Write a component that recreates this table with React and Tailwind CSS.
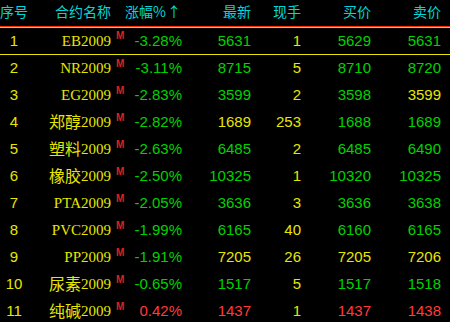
import React from 'react'

// quote board colours
const C = {
  y: 'text-[#e6e600]',
  g: 'text-[#00d200]',
  r: 'text-[#ff3b3b]',
}

const rows = [
  ['1', '', 'EB2009', '-3.28%', 'g', '5631', 'g', '1', '5629', 'g', '5631', 'g'],
  ['2', '', 'NR2009', '-3.11%', 'g', '8715', 'g', '5', '8710', 'g', '8720', 'g'],
  ['3', '', 'EG2009', '-2.83%', 'g', '3599', 'g', '2', '3598', 'g', '3599', 'y'],
  ['4', '郑醇', '2009', '-2.82%', 'g', '1689', 'y', '253', '1688', 'g', '1689', 'g'],
  ['5', '塑料', '2009', '-2.63%', 'g', '6485', 'g', '2', '6485', 'g', '6490', 'g'],
  ['6', '橡胶', '2009', '-2.50%', 'g', '10325', 'g', '1', '10320', 'g', '10325', 'g'],
  ['7', '', 'PTA2009', '-2.05%', 'g', '3636', 'g', '3', '3636', 'g', '3638', 'g'],
  ['8', '', 'PVC2009', '-1.99%', 'g', '6165', 'g', '40', '6160', 'g', '6165', 'g'],
  ['9', '', 'PP2009', '-1.91%', 'g', '7205', 'y', '26', '7205', 'y', '7206', 'y'],
  ['10', '尿素', '2009', '-0.65%', 'g', '1517', 'g', '5', '1517', 'g', '1518', 'g'],
  ['11', '纯碱', '2009', '0.42%', 'r', '1437', 'r', '1', '1437', 'r', '1438', 'r'],
]

const grid = 'grid grid-cols-[28px_97px_57px_69px_50px_70px_70px]'
const num = "font-['Liberation_Sans',sans-serif] text-[15px] text-right whitespace-nowrap"

function Row({ r, first }) {
  const [no, cn, code, chg, chgC, last, lastC, vol, bid, bidC, ask, askC] = r
  return (
    <div
      className={`${grid} items-center ${
        first ? 'h-[28px] border-y border-[#e6e600]' : 'h-[27px]'
      }`}
    >
      <div className={`text-center ${C.y} font-['Liberation_Sans',sans-serif] text-[15px]`}>{no}</div>
      <div className={`flex items-center justify-end whitespace-nowrap ${C.y}`}>
        {cn && (
          <span className="font-['Noto_Sans_CJK_SC',sans-serif] text-[16px] leading-none relative -top-[2px]">{cn}</span>
        )}
        <span className="font-['Liberation_Serif',serif] text-[15px] leading-none">{code}</span>
        <span className="w-[14px] pl-[5px] relative -top-[5px] text-[10px] font-bold leading-none text-[#e02020] font-['Liberation_Sans',sans-serif]">
          M
        </span>
      </div>
      <div className={`${num} ${C[chgC]}`}>{chg}</div>
      <div className={`${num} ${C[lastC]}`}>{last}</div>
      <div className={`${num} ${C.y}`}>{vol}</div>
      <div className={`${num} ${C[bidC]}`}>{bid}</div>
      <div className={`${num} ${C[askC]}`}>{ask}</div>
    </div>
  )
}

export default function App() {
  const head = "font-['Noto_Sans_CJK_SC',sans-serif] text-[14px] text-[#00d8d8] leading-none whitespace-nowrap"
  return (
    <div className="w-[450px] h-[322px] bg-black overflow-hidden">
      {/* header */}
      <div className={`${grid} h-[27px] pt-[4px] border-b border-[#ff2a00] ${head}`}>
        <div className="text-left">序号</div>
        <div className="text-right pr-[14px]">合约名称</div>
        <div className="text-right pr-[5px]">
          涨幅%<span className="ml-[1px]">↑</span>
        </div>
        <div className="text-right">最新</div>
        <div className="text-right">现手</div>
        <div className="text-right">买价</div>
        <div className="text-right">卖价</div>
      </div>

      {rows.map((r, i) => (
        <Row key={r[0]} r={r} first={i === 0} />
      ))}
    </div>
  )
}
